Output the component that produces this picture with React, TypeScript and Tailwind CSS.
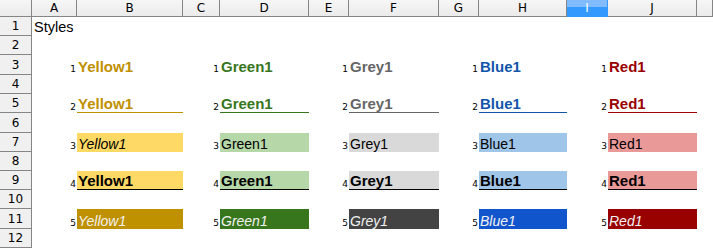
import React from 'react';

type Accent = {
  name: string;
  text: string;
  light: string;
  dark: string;
  line: string;
  italicLight: boolean;
};

const accents: Accent[] = [
  { name: 'Yellow1', text: 'text-[#bf9000]', light: 'bg-[#ffd966]', dark: 'bg-[#bf9000]', line: 'border-[#bf9000]', italicLight: true },
  { name: 'Green1', text: 'text-[#38761d]', light: 'bg-[#b6d7a8]', dark: 'bg-[#38761d]', line: 'border-[#38761d]', italicLight: false },
  { name: 'Grey1', text: 'text-[#666666]', light: 'bg-[#d9d9d9]', dark: 'bg-[#434343]', line: 'border-[#666666]', italicLight: false },
  { name: 'Blue1', text: 'text-[#1155aa]', light: 'bg-[#9fc5e8]', dark: 'bg-[#1155cc]', line: 'border-[#1155aa]', italicLight: false },
  { name: 'Red1', text: 'text-[#990000]', light: 'bg-[#ea9999]', dark: 'bg-[#990000]', line: 'border-[#990000]', italicLight: false },
];

const columns = ['A', 'B', 'C', 'D', 'E', 'F', 'G', 'H', 'I', 'J', ''];
const rowHeights = ['h-[19px]', 'h-[19px]', 'h-[20px]', 'h-[19px]', 'h-[19px]', 'h-[20px]', 'h-[19px]', 'h-[19px]', 'h-[19px]', 'h-[19px]', 'h-[20px]', 'h-[19px]'];

const headerBg = 'bg-[linear-gradient(#f6f6f6,#ebebeb)]';
const cellFont = "font-['Liberation_Sans',Arial,sans-serif]";
const headerFont = "font-['DejaVu_Sans',sans-serif]";

const StyledCell: React.VFC<{ accent: Accent; level: number }> = ({ accent, level }) => {
  let cls = 'text-[15px] font-bold ' + accent.text;
  if (level === 2) cls = 'text-[15px] font-bold border-b ' + accent.text + ' ' + accent.line;
  if (level === 3) cls = 'text-[14px] text-black ' + (accent.italicLight ? 'italic ' : '') + accent.light;
  if (level === 4) cls = 'text-[15px] font-bold text-black border-b border-black ' + accent.light;
  if (level === 5) cls = 'text-[14px] italic text-[#f2f2f2] ' + accent.dark;

  return (
    <div className={'h-full flex items-end pl-[1px] whitespace-nowrap leading-[1.15] ' + cellFont + ' ' + cls}>
      {accent.name}
    </div>
  );
};

export default function App() {
  return (
    <div className="w-[713px] h-[248px] overflow-hidden bg-white">
      <div className="grid grid-cols-[32px_45px_106px_37px_89px_40px_90px_40px_88px_41px_89px_1fr]">
        <div className={'h-[17px] border-r border-b border-[#858585] ' + headerBg} />
        {columns.map((c, i) =>
          c === 'I' ? (
            <div
              key={i}
              className={'h-[17px] border-r border-b border-[#3399ff] bg-[linear-gradient(#80bcff_0%,#80bcff_42%,#3399ff_42%,#3399ff_100%)] text-white text-[12px] leading-[16px] text-center ' + headerFont}
            >
              {c}
            </div>
          ) : (
            <div
              key={i}
              className={'h-[17px] border-r border-b border-[#858585] text-black text-[12px] leading-[16px] text-center ' + headerBg + ' ' + headerFont}
            >
              {c}
            </div>
          )
        )}

        {rowHeights.map((h, r) => {
          const row = r + 1;
          const level = row % 2 === 1 && row >= 3 ? (row - 1) / 2 : 0;
          return (
            <React.Fragment key={row}>
              <div
                className={h + ' border-r border-b border-[#858585] bg-[#f0f0f0] flex items-center justify-center text-[12px] text-black ' + headerFont}
              >
                {row}
              </div>
              {columns.map((c, ci) => {
                if (row === 1 && ci === 0) {
                  return (
                    <div key={ci} className={h + ' flex items-end pl-[2px] text-[14.5px] leading-[1.15] whitespace-nowrap overflow-visible text-black ' + cellFont}>
                      Styles
                    </div>
                  );
                }
                if (level > 0 && ci < 10) {
                  if (ci % 2 === 0) {
                    return (
                      <div
                        key={ci}
                        className={h + ' flex items-end justify-end pr-[1px] pb-[1px] text-[9px] leading-[1.15] text-black ' + headerFont}
                      >
                        {level}
                      </div>
                    );
                  }
                  return (
                    <div key={ci} className={h}>
                      <StyledCell accent={accents[(ci - 1) / 2]} level={level} />
                    </div>
                  );
                }
                return <div key={ci} className={h} />;
              })}
            </React.Fragment>
          );
        })}
      </div>
    </div>
  );
}
